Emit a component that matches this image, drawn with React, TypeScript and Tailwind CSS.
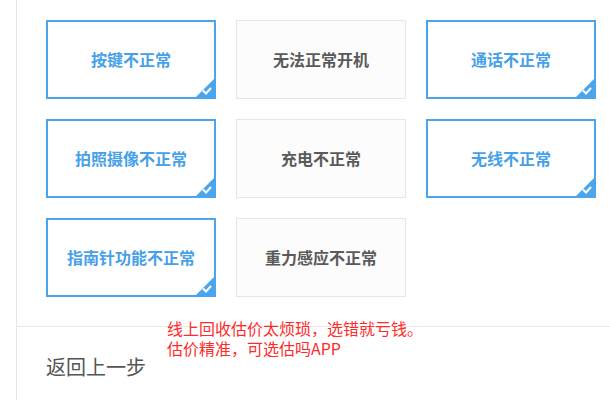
const items: { label: string; selected: boolean }[] = [
  { label: "按键不正常", selected: true },
  { label: "无法正常开机", selected: false },
  { label: "通话不正常", selected: true },
  { label: "拍照摄像不正常", selected: true },
  { label: "充电不正常", selected: false },
  { label: "无线不正常", selected: true },
  { label: "指南针功能不正常", selected: true },
  { label: "重力感应不正常", selected: false },
];

function FaultCard({ label, selected }: { label: string; selected: boolean }) {
  if (!selected) {
    return (
      <div className="h-[79px] w-[170px] border border-[#e6e6e6] bg-[#fcfcfc] flex items-center justify-center pb-[2px] text-[16px] leading-[20px] font-bold text-[#5a5a5a]">
        {label}
      </div>
    );
  }
  return (
    <div className="relative h-[79px] w-[170px] border-2 border-[#4aa5ec] bg-white flex items-center justify-center pb-[2px] text-[16px] leading-[20px] font-bold text-[#47a1e8]">
      {label}
      {/* selected corner */}
      <svg className="absolute -right-[2px] -bottom-[2px] h-[22px] w-[22px]" viewBox="0 0 22 22">
        <polygon points="22,0 22,22 0,22" fill="#4aa5ec" />
        <polyline points="9,13.5 12,16.5 17,11" fill="none" stroke="#fff" strokeWidth={2} />
      </svg>
    </div>
  );
}

export default function App() {
  return (
    <div
      className="relative flex h-[400px] w-[610px] bg-white overflow-hidden"
      style={{ fontFamily: '"Noto Sans CJK SC", "Liberation Sans", sans-serif' }}
    >
      <div className="w-4 shrink-0" />
      <div className="flex-1 border-l border-[#e6e6e6]">
        <div className="pt-5 pl-[29px] grid grid-cols-[repeat(3,170px)] gap-5">
          {items.map((it) => (
            <FaultCard key={it.label} label={it.label} selected={it.selected} />
          ))}
        </div>

        <div className="mt-[29px] border-t border-[#e8e8e8] pl-[29px] pt-[29px]">
          <button className="text-[20px] leading-[20px] text-[#555]">返回上一步</button>
        </div>
      </div>

      {/* red annotation */}
      <div className="absolute left-[167px] top-[318px] text-[16px] leading-[20px] text-[#fe2b2b]">
        <p>线上回收估价太烦琐，选错就亏钱。</p>
        <p>估价精准，可选估吗APP</p>
      </div>
    </div>
  );
}
